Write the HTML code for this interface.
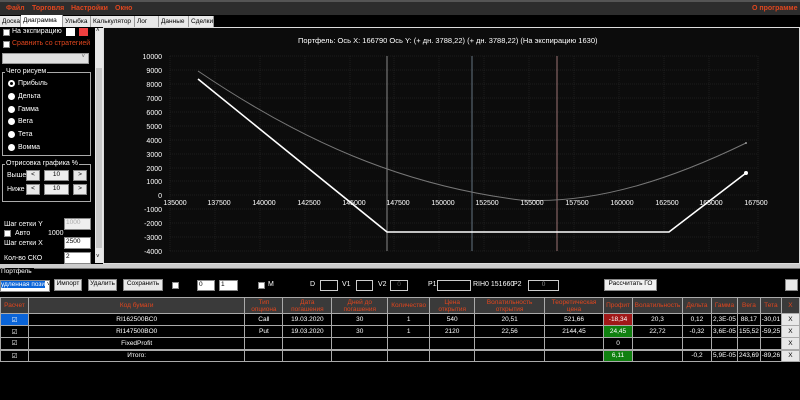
<!DOCTYPE html>
<html><head><meta charset="utf-8"><style>
*{margin:0;padding:0;box-sizing:border-box}
body{width:800px;height:400px;background:#000;font-family:"Liberation Sans","Noto Sans CJK SC",sans-serif;font-size:7px;color:#fff;position:relative;overflow:hidden}
.a{position:absolute;white-space:nowrap}
.menu{left:0;top:0;width:800px;height:15px;background:#2d2d2d;border-top:2px solid #555}
.menu span{position:absolute;top:3px;color:#e0461e;font-size:7px;font-weight:bold}
.tab{position:absolute;top:16px;height:11px;background:#e8e8e8;color:#000;font-size:6.5px;padding:2px 2px 0;border-right:1px solid #999}
.btn{position:absolute;background:#e8e8e8;border:1px solid #888;color:#000;text-align:center;font-size:6.5px}
.box{position:absolute;background:#fff;border:1px solid #888;color:#000;font-size:6.5px;text-align:center;overflow:hidden;white-space:nowrap}
.grp{position:absolute;border:1px solid #aaa}
.cb{position:absolute;width:7px;height:7px;background:#fff;border:1px solid #888}
.rad{position:absolute;width:7px;height:7px;border-radius:50%;background:#fff}
table{position:absolute;left:0;top:297px;border-collapse:collapse;font-size:6.5px}
td{border:1px solid #aaa;text-align:center;height:12px;padding:0;color:#fff;overflow:hidden;white-space:nowrap}
tr.h td{background:#3a3a3a;color:#e0461e;height:16px;line-height:7px}
.x{background:#e8e8e8;color:#000}
</style></head><body>
<div class="a menu"><span style="left:6px">Файл</span><span style="left:32px">Торговля</span><span style="left:71px">Настройки</span><span style="left:115px">Окно</span><span style="left:752px">О программе</span></div>
<div class="tab" style="left:0;width:21px">Доска</div>
<div class="tab" style="left:21px;width:42px;background:#fff;top:15px;height:12px">Диаграмма</div>
<div class="tab" style="left:63px;width:28px">Улыбка</div>
<div class="tab" style="left:91px;width:44px">Калькулятор</div>
<div class="tab" style="left:135px;width:24px">Лог</div>
<div class="tab" style="left:159px;width:30px">Данные</div>
<div class="tab" style="left:189px;width:25px">Сделки</div>
<!-- left panel -->
<div class="cb" style="left:3px;top:29px"></div><div class="a" style="left:12px;top:28px">На экспирацию</div>
<div class="a" style="left:66px;top:28px;width:9px;height:8px;background:#fff"></div>
<div class="a" style="left:79px;top:28px;width:9px;height:8px;background:#f04040"></div>
<div class="cb" style="left:3px;top:41px"></div><div class="a" style="left:12px;top:40px;color:#e0461e">Сравнить со стратегией</div>
<div class="a" style="left:2px;top:53px;width:87px;height:11px;background:#e0e0e0;border:1px solid #999;color:#666;text-align:right;padding-right:3px;font-size:6px">˅</div>
<div class="grp" style="left:2px;top:72px;width:89px;height:84px"></div>
<div class="a" style="left:5px;top:68px;background:#000;padding:0 1px">Чего рисуем</div>
<div class="rad" style="left:8px;top:80px;background:#000;border:2px solid #fff"></div><div class="a" style="left:18px;top:80px">Прибыль</div>
<div class="rad" style="left:8px;top:93px"></div><div class="a" style="left:18px;top:93px">Дельта</div>
<div class="rad" style="left:8px;top:106px"></div><div class="a" style="left:18px;top:106px">Гамма</div>
<div class="rad" style="left:8px;top:118px"></div><div class="a" style="left:18px;top:118px">Вега</div>
<div class="rad" style="left:8px;top:131px"></div><div class="a" style="left:18px;top:131px">Тета</div>
<div class="rad" style="left:8px;top:144px"></div><div class="a" style="left:18px;top:144px">Вомма</div>
<div class="grp" style="left:2px;top:164px;width:89px;height:38px"></div>
<div class="a" style="left:5px;top:160px;background:#000;padding:0 1px">Отрисовка графика %</div>
<div class="a" style="left:7px;top:172px">Выше</div><div class="btn" style="left:26px;top:170px;width:14px;height:11px">&lt;</div><div class="box" style="left:44px;top:170px;width:25px;height:11px;background:#eee">10</div><div class="btn" style="left:73px;top:170px;width:14px;height:11px">&gt;</div>
<div class="a" style="left:7px;top:186px">Ниже</div><div class="btn" style="left:26px;top:184px;width:14px;height:11px">&lt;</div><div class="box" style="left:44px;top:184px;width:25px;height:11px;background:#eee">10</div><div class="btn" style="left:73px;top:184px;width:14px;height:11px">&gt;</div>
<div class="a" style="left:4px;top:221px">Шаг сетки Y</div><div class="box" style="left:64px;top:218px;width:27px;height:12px;background:#eee;color:#aaa;text-align:left;padding-left:1px">1000</div>
<div class="cb" style="left:4px;top:230px"></div><div class="a" style="left:15px;top:230px">Авто</div><div class="a" style="left:48px;top:230px">1000</div>
<div class="a" style="left:4px;top:240px">Шаг сетки X</div><div class="box" style="left:64px;top:237px;width:27px;height:12px;text-align:left;padding-left:1px">2500</div>
<div class="a" style="left:4px;top:255px">Кол-во СКО</div><div class="box" style="left:64px;top:252px;width:27px;height:12px;text-align:left;padding-left:1px">2</div>
<div class="a" style="left:95px;top:28px;width:8px;height:235px;background:#e8e8e8"></div>
<div class="a" style="left:96px;top:68px;width:6px;height:180px;background:#c8c8c8"></div>
<div class="a" style="left:96px;top:28px;color:#000;font-size:6px">˄</div>
<div class="a" style="left:96px;top:254px;color:#000;font-size:6px">˅</div>
<!-- chart -->
<div class="a" style="left:103px;top:27px;width:697px;height:237px;background:#0c0c0c;border:1px solid #ddd"></div>
<svg class="a" style="left:0;top:0" width="800" height="270" font-family="Liberation Sans" font-size="7" fill="#fff">
<g stroke="#2a2a2a" stroke-dasharray="1,1" stroke-width="0.6">
<path d="M170 56H758M170 70H758M170 84H758M170 98H758M170 112H758M170 126H758M170 140H758M170 154H758M170 168H758M170 181H758M170 195H758M170 209H758M170 223H758M170 237H758M170 251H758"/>
<path d="M170 56V251M215 56V251M260 56V251M305 56V251M350 56V251M394 56V251M439 56V251M484 56V251M529 56V251M574 56V251M619 56V251M664 56V251M709 56V251M758 56V251"/>
</g>
<line x1="387" y1="56" x2="387" y2="251" stroke="#aaa" stroke-width="0.8"/>
<line x1="472" y1="56" x2="472" y2="251" stroke="#7a8ea0" stroke-width="0.8"/>
<line x1="557" y1="56" x2="557" y2="251" stroke="#c09090" stroke-width="0.8"/>
<path d="M198 71 C300 140, 400 185, 520 200 C600 205, 680 175, 746 143" stroke="#777" fill="none" stroke-width="1"/>
<circle cx="746" cy="143" r="1" fill="#999"/>
<polyline points="198,79 387,232 669,232 746,173" stroke="#fff" fill="none" stroke-width="1.6"/>
<circle cx="746" cy="173" r="2" fill="#fff"/>
<g text-anchor="end">
<text x="162" y="59">10000</text><text x="162" y="73">9000</text><text x="162" y="87">8000</text><text x="162" y="101">7000</text><text x="162" y="115">6000</text><text x="162" y="129">5000</text><text x="162" y="143">4000</text><text x="162" y="157">3000</text><text x="162" y="171">2000</text><text x="162" y="184">1000</text><text x="162" y="198">0</text><text x="162" y="212">-1000</text><text x="162" y="226">-2000</text><text x="162" y="240">-3000</text><text x="162" y="254">-4000</text>
</g>
<g text-anchor="middle">
<text x="175" y="205">135000</text><text x="219" y="205">137500</text><text x="264" y="205">140000</text><text x="309" y="205">142500</text><text x="354" y="205">145000</text><text x="398" y="205">147500</text><text x="443" y="205">150000</text><text x="487" y="205">152500</text><text x="532" y="205">155000</text><text x="577" y="205">157500</text><text x="622" y="205">160000</text><text x="667" y="205">162500</text><text x="711" y="205">165000</text><text x="756" y="205">167500</text>
</g>
<text x="298" y="43" font-size="7.5">Портфель: Ось X: 166790 Ось Y:  (+ дн. 3788,22)  (+ дн. 3788,22)  (На экспирацию 1630)</text>
</svg>
<!-- bottom -->
<div class="a" style="left:0;top:264px;width:800px;height:4px;background:#ccc"></div>
<div class="a" style="left:0;top:268px;width:800px;height:1px;background:#777"></div>
<div class="a" style="left:1px;top:268px;font-size:6.5px;background:#000;padding-right:2px">Портфель</div>
<div class="box" style="left:0;top:280px;width:50px;height:12px;text-align:left"><span style="background:#0a64d8;color:#fff">удленная пози</span> ˅</div>
<div class="btn" style="left:54px;top:279px;width:28px;height:12px">Импорт</div>
<div class="btn" style="left:88px;top:279px;width:29px;height:12px">Удалить</div>
<div class="btn" style="left:123px;top:279px;width:40px;height:12px">Сохранить</div>
<div class="cb" style="left:172px;top:282px"></div>
<div class="box" style="left:197px;top:280px;width:18px;height:11px;text-align:left;padding-left:1px">0</div>
<div class="box" style="left:219px;top:280px;width:19px;height:11px;text-align:left;padding-left:1px">1</div>
<div class="cb" style="left:258px;top:282px"></div><div class="a" style="left:268px;top:281px">M</div>
<div class="a" style="left:310px;top:281px">D</div><div class="box" style="left:320px;top:280px;width:18px;height:11px;background:#000;border-color:#ccc"></div>
<div class="a" style="left:342px;top:281px">V1</div><div class="box" style="left:356px;top:280px;width:17px;height:11px;background:#000;border-color:#ccc"></div>
<div class="a" style="left:378px;top:281px">V2</div><div class="box" style="left:390px;top:280px;width:18px;height:11px;background:#000;border-color:#ccc;color:#555">0</div>
<div class="a" style="left:428px;top:281px">P1</div><div class="box" style="left:437px;top:280px;width:34px;height:11px;background:#000;border-color:#ccc"></div>
<div class="a" style="left:473px;top:281px">RIH0 151660</div><div class="a" style="left:513px;top:281px">P2</div>
<div class="box" style="left:528px;top:280px;width:31px;height:11px;background:#000;border-color:#ccc;color:#888">0</div>
<div class="btn" style="left:604px;top:279px;width:53px;height:12px;background:#f0f0f0">Рассчитать ГО</div>
<div class="btn" style="left:785px;top:279px;width:13px;height:12px"></div>
<table>
<colgroup><col width="28"><col width="217"><col width="38"><col width="49"><col width="56"><col width="42"><col width="45"><col width="70"><col width="59"><col width="29"><col width="50"><col width="29"><col width="26"><col width="23"><col width="21"><col width="18"></colgroup>
<tr class="h"><td>Расчет</td><td>Код бумаги</td><td>Тип<br>опциона</td><td>Дата<br>погашения</td><td>Дней до<br>погашения</td><td>Количество</td><td>Цена<br>открытия</td><td>Волатильность<br>открытия</td><td>Теоретическая<br>цена</td><td>Профит</td><td>Волатильность</td><td>Дельта</td><td>Гамма</td><td>Вега</td><td>Тета</td><td>X</td></tr>
<tr><td style="background:#0a64d8">☑</td><td>RI162500BC0</td><td>Call</td><td>19.03.2020</td><td>30</td><td>1</td><td>540</td><td>20,51</td><td>521,66</td><td style="background:#a01818">-18,34</td><td>20,3</td><td>0,12</td><td>2,3E-05</td><td>88,17</td><td>-30,01</td><td class="x">X</td></tr>
<tr><td>☑</td><td>RI147500BO0</td><td>Put</td><td>19.03.2020</td><td>30</td><td>1</td><td>2120</td><td>22,56</td><td>2144,45</td><td style="background:#108010">24,45</td><td>22,72</td><td>-0,32</td><td>3,6E-05</td><td>155,52</td><td>-59,25</td><td class="x">X</td></tr>
<tr><td>☑</td><td>FixedProfit</td><td></td><td></td><td></td><td></td><td></td><td></td><td></td><td>0</td><td></td><td></td><td></td><td></td><td></td><td class="x">X</td></tr>
<tr style="border-top:2px solid #aaa"><td>☑</td><td>Итого:</td><td></td><td></td><td></td><td></td><td></td><td></td><td></td><td style="background:#108010">6,11</td><td></td><td>-0,2</td><td>5,9E-05</td><td>243,69</td><td>-89,26</td><td class="x">X</td></tr>
</table>
</body></html>
